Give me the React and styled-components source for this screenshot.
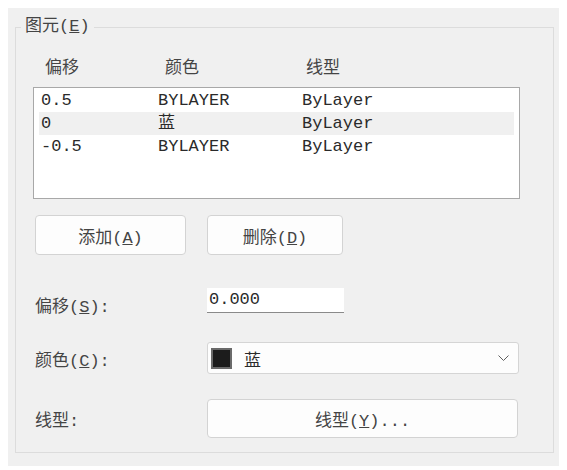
import React from 'react';
import styled, { createGlobalStyle } from 'styled-components';

const GlobalStyle = createGlobalStyle`
  body {
    margin: 8px;
    background: #fff;
    font-family: "Liberation Mono", "Noto Sans CJK SC", monospace;
    font-size: 17px;
    color: #444;
  }
`;

const Panel = styled.div`
  box-sizing: border-box;
  width: 555px;
  height: 458px;
  background: #f0f0f0;
  padding: 9px 9px 0 7px;
`;

const Group = styled.fieldset`
  margin: 0;
  padding: 0 0 14px 0;
  border: 1px solid #dcdcdc;
  min-width: 0;
`;

const Legend = styled.legend`
  margin-left: 5px;
  padding: 0 4px;
  line-height: 20px;
  color: #444;
`;

const Key = styled.span`
  text-decoration: underline;
  text-decoration-thickness: 1px;
  text-underline-offset: 1px;
`;

const HeaderRow = styled.div`
  display: grid;
  grid-template-columns: 120px 141px 1fr;
  margin: 22px 0 0 17px;
  padding-left: 12px;
  height: 20px;
  line-height: 20px;
  color: #444;
`;

const List = styled.div`
  box-sizing: border-box;
  margin: 8px 0 0 17px;
  width: 487px;
  height: 112px;
  border: 1px solid #a8a8a8;
  background: #fff;
  padding: 1px 5px;
`;

const ListRow = styled.div`
  display: grid;
  grid-template-columns: 117px 144px 1fr;
  padding-left: 2px;
  height: 23px;
  line-height: 23px;
  color: #2a2a2a;
  background: ${p => (p.$selected ? '#f0f0f0' : 'transparent')};
`;

const ButtonRow = styled.div`
  display: flex;
  gap: 21px;
  margin: 16px 0 0 19px;
`;

const Button = styled.button`
  box-sizing: border-box;
  width: ${p => p.$width}px;
  height: ${p => p.$height || 40}px;
  border: 1px solid #d3d3d3;
  border-radius: 4px;
  background: #fdfdfd;
  font: inherit;
  color: #444;
  padding: 0;
`;

const FieldRow = styled.div`
  display: grid;
  grid-template-columns: 172px 1fr;
  align-items: center;
  margin: ${p => p.$top}px 0 0 19px;
  height: ${p => p.$height}px;
`;

const Label = styled.span`
  color: #444;
`;

const TextInput = styled.div`
  box-sizing: border-box;
  align-self: start;
  width: 137px;
  height: 25px;
  background: #fff;
  border-bottom: 1px solid #8a8a8a;
  padding-left: 2px;
  line-height: 23px;
  color: #2a2a2a;
`;

const Combo = styled.div`
  box-sizing: border-box;
  display: flex;
  align-items: center;
  width: 312px;
  height: 32px;
  border: 1px solid #d5d5d5;
  border-radius: 3px;
  background: #fdfdfd;
  padding: 0 9px 0 3px;
`;

const Swatch = styled.span`
  box-sizing: border-box;
  width: 21px;
  height: 21px;
  border: 2px solid #6a6a6a;
  background: ${p => p.$color};
`;

const ComboText = styled.span`
  flex: 1;
  margin-left: 12px;
  color: #2a2a2a;
`;

const rows = [
  { offset: '0.5', color: 'BYLAYER', type: 'ByLayer' },
  { offset: '0', color: '蓝', type: 'ByLayer', selected: true },
  { offset: '-0.5', color: 'BYLAYER', type: 'ByLayer' },
];

const App = () => (
  <>
    <GlobalStyle />
    <Panel>
      <Group>
        <Legend>
          图元(<Key>E</Key>)
        </Legend>
        <HeaderRow>
          <span>偏移</span>
          <span>颜色</span>
          <span>线型</span>
        </HeaderRow>
        <List>
          {rows.map(r => (
            <ListRow key={r.offset} $selected={r.selected}>
              <span>{r.offset}</span>
              <span>{r.color}</span>
              <span>{r.type}</span>
            </ListRow>
          ))}
        </List>
        <ButtonRow>
          <Button $width={151}>
            添加(<Key>A</Key>)
          </Button>
          <Button $width={136}>
            删除(<Key>D</Key>)
          </Button>
        </ButtonRow>
        <FieldRow $top={33} $height={33}>
          <Label>
            偏移(<Key>S</Key>):
          </Label>
          <TextInput>0.000</TextInput>
        </FieldRow>
        <FieldRow $top={21} $height={32}>
          <Label>
            颜色(<Key>C</Key>):
          </Label>
          <Combo>
            <Swatch $color="#1c1c1c" />
            <ComboText>蓝</ComboText>
            <svg width="11" height="6" viewBox="0 0 11 6">
              <polyline points="0.5,0.5 5.5,5.5 10.5,0.5" fill="none" stroke="#606060" strokeWidth="1" />
            </svg>
          </Combo>
        </FieldRow>
        <FieldRow $top={25} $height={39}>
          <Label>线型:</Label>
          <Button $width={311} $height={39}>
            线型(<Key>Y</Key>)...
          </Button>
        </FieldRow>
      </Group>
    </Panel>
  </>
);

export default App;
